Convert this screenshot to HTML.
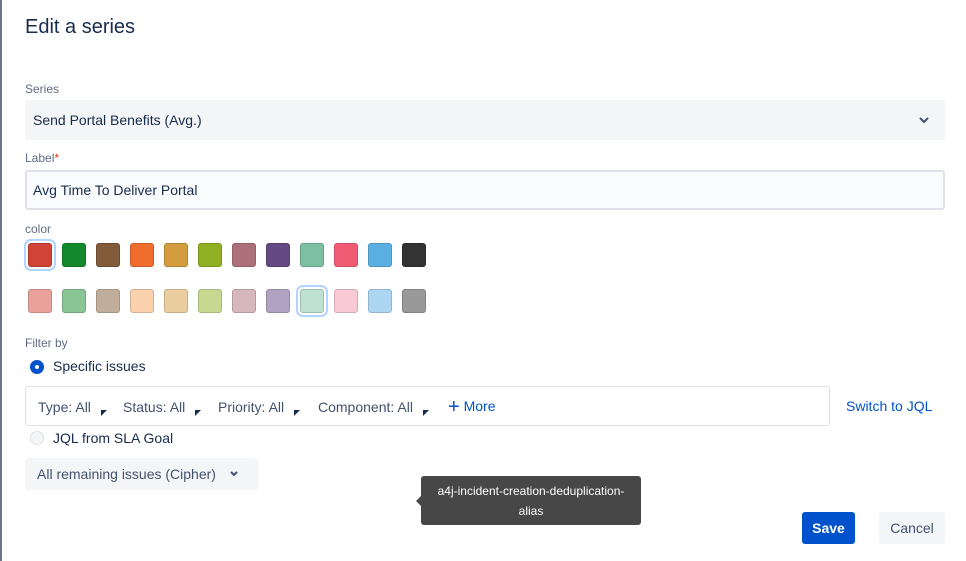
<!DOCTYPE html>
<html><head><style>
*{box-sizing:border-box;margin:0;padding:0}
body{width:966px;height:561px;background:#fff;font-family:"Liberation Sans",sans-serif;position:relative;overflow:hidden;color:#172b4d}
.abs{position:absolute}
.lbl{font-size:12px;color:#5e6c84}
.sw{position:absolute;width:24px;height:24px;border-radius:3px;border:1px solid rgba(0,0,0,.15)}
.sel{box-shadow:0 0 0 2px #fff,0 0 0 4px #b3d4ff}
.f{position:absolute;top:12px;font-size:14px;color:#42526e;white-space:nowrap}
.tri{display:inline-block;width:0;height:0;border-top:6px solid #172b4d;border-right:6px solid transparent;margin-left:10px;vertical-align:-4px}
</style></head><body>
<div class="abs" style="left:0;top:0;width:2px;height:561px;background:#6b778c"></div>
<div class="abs" style="left:25px;top:16px;font-size:20px;color:#172b4d">Edit a series</div>
<div class="abs lbl" style="left:25px;top:82px">Series</div>
<div class="abs" style="left:25px;top:100px;width:920px;height:40px;background:#f4f5f7;border-radius:3px"></div>
<div class="abs" style="left:33px;top:112px;font-size:14px">Send Portal Benefits (Avg.)</div>
<svg class="abs" style="left:918px;top:115px" width="12" height="10"><path d="M2 3l4 4 4-4" stroke="#42526e" stroke-width="2" fill="none"/></svg>
<div class="abs lbl" style="left:25px;top:151px">Label<span style="color:#de350b">*</span></div>
<div class="abs" style="left:25px;top:170px;width:920px;height:40px;background:#fafbfc;border:2px solid #dfe1e6;border-radius:3px"></div>
<div class="abs" style="left:33px;top:182px;font-size:14px">Avg Time To Deliver Portal</div>
<div class="abs lbl" style="left:25px;top:222px">color</div>
<div class="sw sel" style="left:28px;top:243px;background:#d04437"></div>
<div class="sw" style="left:62px;top:243px;background:#14892c"></div>
<div class="sw" style="left:96px;top:243px;background:#815b3a"></div>
<div class="sw" style="left:130px;top:243px;background:#f06d2e"></div>
<div class="sw" style="left:164px;top:243px;background:#d39c3f"></div>
<div class="sw" style="left:198px;top:243px;background:#8eb021"></div>
<div class="sw" style="left:232px;top:243px;background:#ac707a"></div>
<div class="sw" style="left:266px;top:243px;background:#654982"></div>
<div class="sw" style="left:300px;top:243px;background:#7bc0a1"></div>
<div class="sw" style="left:334px;top:243px;background:#f15c75"></div>
<div class="sw" style="left:368px;top:243px;background:#59afe1"></div>
<div class="sw" style="left:402px;top:243px;background:#333"></div>
<div class="sw" style="left:28px;top:289px;background:#e8a29b"></div>
<div class="sw" style="left:62px;top:289px;background:#8ac595"></div>
<div class="sw" style="left:96px;top:289px;background:#c0ad9b"></div>
<div class="sw" style="left:130px;top:289px;background:#f9d1ad"></div>
<div class="sw" style="left:164px;top:289px;background:#eacd9e"></div>
<div class="sw" style="left:198px;top:289px;background:#c7d991"></div>
<div class="sw" style="left:232px;top:289px;background:#d6b7bc"></div>
<div class="sw" style="left:266px;top:289px;background:#b1a2c1"></div>
<div class="sw sel" style="left:300px;top:289px;background:#bee0d0"></div>
<div class="sw" style="left:334px;top:289px;background:#f9c9d6"></div>
<div class="sw" style="left:368px;top:289px;background:#acd6f1"></div>
<div class="sw" style="left:402px;top:289px;background:#999"></div>
<div class="abs lbl" style="left:25px;top:336px">Filter by</div>
<div class="abs" style="left:30px;top:360px;width:14px;height:14px;border-radius:50%;background:#0052cc"><div style="position:absolute;left:5px;top:5px;width:4px;height:4px;border-radius:50%;background:#fff"></div></div>
<div class="abs" style="left:53px;top:358px;font-size:14px">Specific issues</div>
<div class="abs" style="left:25px;top:386px;width:805px;height:40px;border:1px solid #dfe1e6;border-radius:3px">
<span class="f" style="left:12px">Type: All<i class="tri"></i></span>
<span class="f" style="left:97px">Status: All<i class="tri"></i></span>
<span class="f" style="left:192px">Priority: All<i class="tri"></i></span>
<span class="f" style="left:292px">Component: All<i class="tri"></i></span>
<span class="f" style="left:422px;top:9px;color:#0052cc"><b style="font-size:20px;font-weight:normal;vertical-align:-2px">+</b> More</span></div>
<div class="abs" style="left:846px;top:398px;font-size:14px;color:#0052cc">Switch to JQL</div>
<div class="abs" style="left:30px;top:431px;width:14px;height:14px;border-radius:50%;background:#f4f5f7;border:1px solid #dfe1e6"></div>
<div class="abs" style="left:53px;top:430px;font-size:14px">JQL from SLA Goal</div>
<div class="abs" style="left:25px;top:458px;width:233px;height:32px;background:#f4f5f7;border-radius:3px"></div>
<div class="abs" style="left:37px;top:466px;font-size:14px;color:#42526e">All remaining issues (Cipher)</div>
<svg class="abs" style="left:228px;top:469px" width="12" height="10"><path d="M3 3l3 3 3-3" stroke="#42526e" stroke-width="2" fill="none"/></svg>
<div class="abs" style="left:421px;top:476px;width:220px;height:49px;background:#474747;border-radius:3px;color:#fff;font-size:12px;text-align:center;line-height:20px;padding-top:5px">a4j-incident-creation-deduplication-<br>alias</div>
<div class="abs" style="left:416px;top:496px;width:0;height:0;border:5px solid transparent;border-right-color:#474747;border-left:0"></div>
<div class="abs" style="left:802px;top:512px;width:53px;height:32px;background:#0052cc;border-radius:3px;color:#fff;font-size:14px;font-weight:bold;text-align:center;line-height:32px">Save</div>
<div class="abs" style="left:879px;top:512px;width:66px;height:32px;background:#f4f5f7;border-radius:3px;color:#42526e;font-size:14px;text-align:center;line-height:32px">Cancel</div>
</body></html>
